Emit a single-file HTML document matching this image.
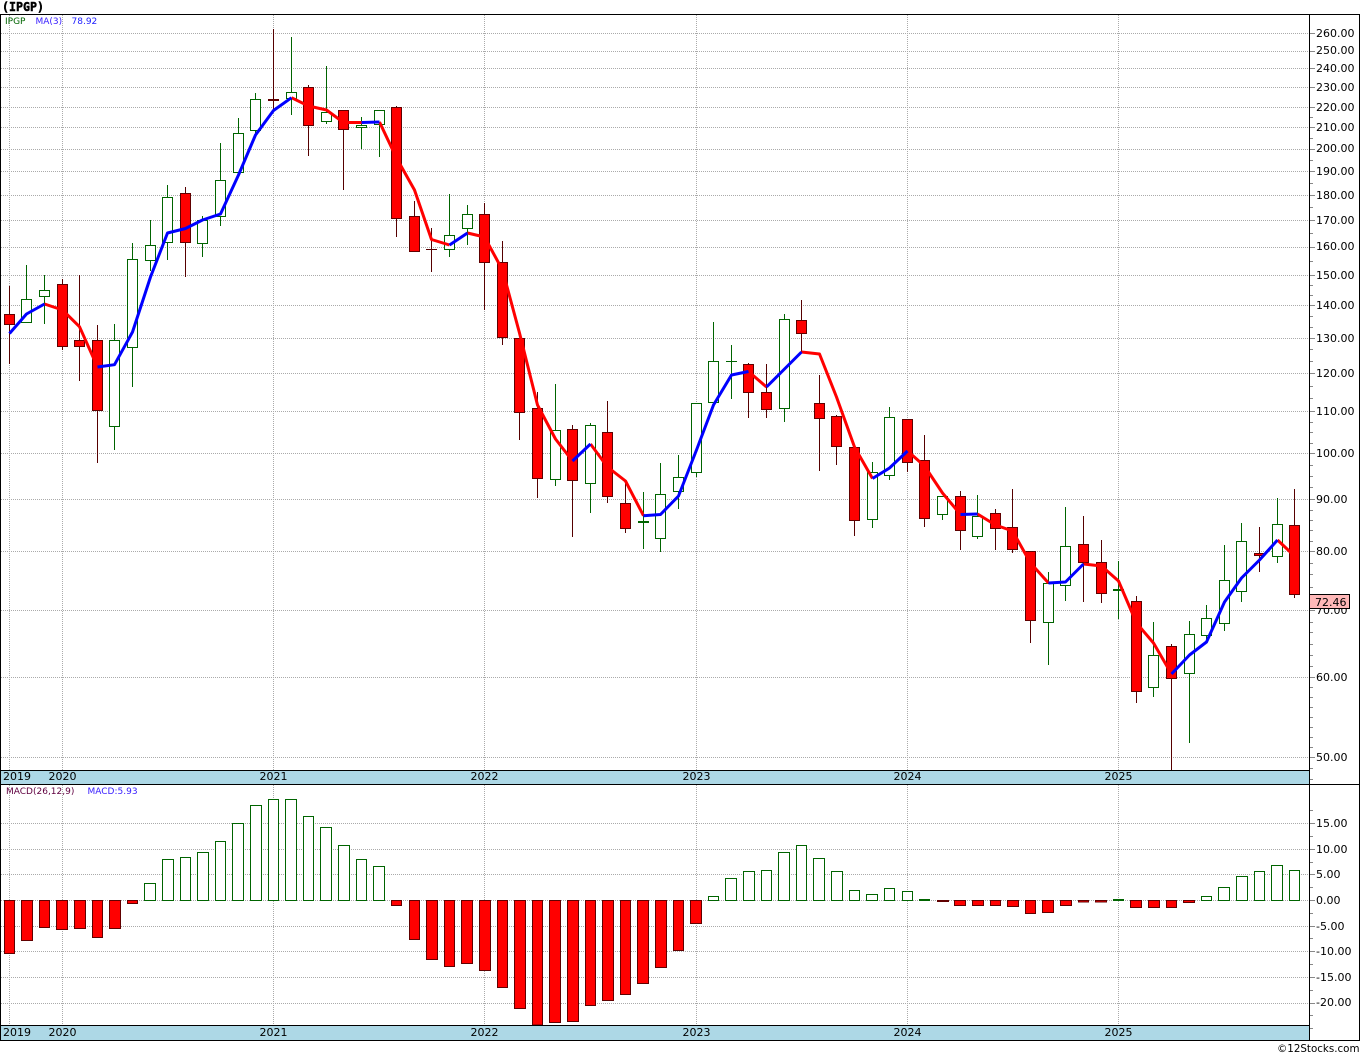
<!DOCTYPE html>
<html>
<head>
<meta charset="utf-8">
<title>IPGP</title>
<style>
html,body{margin:0;padding:0;background:#fff;width:1360px;height:1056px;overflow:hidden}
svg{display:block}
text{font-family:"DejaVu Sans","Liberation Sans",sans-serif;font-size:11px;fill:#000}
.s{font-size:9px}
.crisp{shape-rendering:crispEdges}
</style>
</head>
<body>
<svg width="1360" height="1056" viewBox="0 0 1360 1056" xmlns="http://www.w3.org/2000/svg">
<rect width="1360" height="1056" fill="#fff"/>

<!-- grid -->
<g class="crisp" fill="none" stroke="#aaa" stroke-width="1" stroke-dasharray="1 1">
<path d="M1 33.5H1309M1 51.5H1309M1 68.5H1309M1 87.5H1309M1 107.5H1309M1 127.5H1309M1 149.5H1309M1 171.5H1309M1 195.5H1309M1 220.5H1309M1 247.5H1309M1 275.5H1309M1 305.5H1309M1 338.5H1309M1 373.5H1309M1 411.5H1309M1 453.5H1309M1 499.5H1309M1 551.5H1309M1 610.5H1309M1 677.5H1309M1 757.5H1309"/>
<path d="M9.5 15V770M62.5 15V770M273.5 15V770M484.5 15V770M696.5 15V770M907.5 15V770M1118.5 15V770"/>
<path d="M1 823.5H1309M1 849.5H1309M1 874.5H1309M1 900.5H1309M1 926.5H1309M1 951.5H1309M1 977.5H1309M1 1003.5H1309"/>
<path d="M9.5 785V1025M62.5 785V1025M273.5 785V1025M484.5 785V1025M696.5 785V1025M907.5 785V1025M1118.5 785V1025"/>
</g>

<!-- axis ticks -->
<g class="crisp" fill="none" stroke="#888" stroke-width="1">
<path d="M1310 33.5H1315M1310 51.5H1315M1310 68.5H1315M1310 87.5H1315M1310 107.5H1315M1310 127.5H1315M1310 149.5H1315M1310 171.5H1315M1310 195.5H1315M1310 220.5H1315M1310 247.5H1315M1310 275.5H1315M1310 305.5H1315M1310 338.5H1315M1310 373.5H1315M1310 411.5H1315M1310 453.5H1315M1310 499.5H1315M1310 551.5H1315M1310 610.5H1315M1310 677.5H1315M1310 757.5H1315"/>
<path d="M1310 117.5H1313M1310 138.5H1313M1310 160.5H1313M1310 183.5H1313M1310 207.5H1313M1310 233.5H1313M1310 261.5H1313M1310 285.5H1313M1310 295.5H1313M1310 316.5H1313M1310 327.5H1313M1310 349.5H1313M1310 361.5H1313M1310 386.5H1313M1310 398.5H1313M1310 422.5H1313M1310 432.5H1313M1310 443.5H1313M1310 465.5H1313M1310 476.5H1313M1310 487.5H1313M1310 510.5H1313M1310 520.5H1313M1310 530.5H1313M1310 541.5H1313M1310 563.5H1313M1310 574.5H1313M1310 587.5H1313M1310 597.5H1313M1310 622.5H1313M1310 632.5H1313M1310 644.5H1313M1310 655.5H1313M1310 666.5H1313M1310 687.5H1313M1310 697.5H1313M1310 707.5H1313M1310 717.5H1313M1310 727.5H1313M1310 737.5H1313M1310 747.5H1313M1310 768.5H1313M1310 779.5H1313"/>
<path d="M1310 823.5H1315M1310 849.5H1315M1310 874.5H1315M1310 900.5H1315M1310 926.5H1315M1310 951.5H1315M1310 977.5H1315M1310 1003.5H1315"/>
<path d="M1310 810.5H1313M1310 836.5H1313M1310 862.5H1313M1310 887.5H1313M1310 913.5H1313M1310 938.5H1313M1310 964.5H1313M1310 990.5H1313M1310 1015.5H1313M1310 1028.5H1313"/>
</g>

<!-- wicks -->
<g class="crisp" fill="none" stroke-width="1">
<path stroke="#560000" d="M9.5 286V364M62.5 279V350M79.5 275V381M97.5 325V463M185.5 187V277M273.5 29V111M308.5 85V156M343.5 110V190M396.5 106V237M414.5 201V252M431.5 228V272M426 249.5H437M484.5 203V310M502.5 241V345M519.5 338V440M537.5 392V498M572.5 425V537M607.5 401V503M625.5 481V533M748.5 363V418M766.5 364V418M801.5 300V352M819.5 375V471M836.5 415V465M854.5 445V536M907.5 419V472M924.5 435V527M960.5 491V550M995.5 509V550M1012.5 489V553M1030.5 551V643M1083.5 516V602M1101.5 540V603M1136.5 596V703M1171.5 644V770M1259.5 527V572M1294.5 489V598"/>
<path stroke="#006400" d="M26.5 265V322M44.5 275V324M114.5 324V450M132.5 243V387M150.5 220V271M167.5 185V260M202.5 216V257M220.5 143V226M238.5 118V173M255.5 93V135M291.5 37V115M326.5 66V124M361.5 117V149M379.5 110V157M449.5 194V257M467.5 205V245M555.5 384V486M590.5 423V513M643.5 492V549M660.5 463V552M678.5 455V509M696.5 403V477M713.5 322V407M731.5 345V399M726 361.5H737M784.5 314V422M872.5 462V528M889.5 407V480M942.5 496V520M977.5 495V539M1048.5 572V665M1065.5 507V601M1118.5 561V619M1153.5 622V697M1189.5 621V743M1206.5 605V643M1224.5 545V631M1241.5 523V602M1277.5 498V563"/>
</g>

<!-- candle bodies -->
<g class="crisp" stroke-width="1">
<path fill="#f00" stroke="#600000" d="M4.5 314.5h10v10h-10zM57.5 284.5h10v62h-10zM74.5 340.5h10v6h-10zM92.5 340.5h10v70h-10zM180.5 193.5h10v49h-10zM268.5 99.5h10v1h-10zM303.5 87.5h10v38h-10zM338.5 110.5h10v19h-10zM391.5 107.5h10v111h-10zM409.5 216.5h10v35h-10zM479.5 214.5h10v48h-10zM497.5 262.5h10v75h-10zM514.5 338.5h10v74h-10zM532.5 408.5h10v70h-10zM567.5 429.5h10v51h-10zM602.5 432.5h10v64h-10zM620.5 503.5h10v25h-10zM743.5 364.5h10v28h-10zM761.5 392.5h10v17h-10zM796.5 320.5h10v13h-10zM814.5 403.5h10v15h-10zM831.5 416.5h10v30h-10zM849.5 447.5h10v73h-10zM902.5 419.5h10v43h-10zM919.5 460.5h10v58h-10zM955.5 496.5h10v34h-10zM990.5 513.5h10v15h-10zM1007.5 527.5h10v22h-10zM1025.5 551.5h10v69h-10zM1078.5 544.5h10v18h-10zM1096.5 562.5h10v31h-10zM1131.5 601.5h10v90h-10zM1166.5 646.5h10v32h-10zM1254.5 553.5h10v2h-10zM1289.5 525.5h10v69h-10z"/>
<path fill="#fff" stroke="#006400" d="M21.5 299.5h10v23h-10zM39.5 290.5h10v6h-10zM109.5 340.5h10v86h-10zM127.5 259.5h10v88h-10zM145.5 245.5h10v15h-10zM162.5 197.5h10v45h-10zM197.5 220.5h10v23h-10zM215.5 180.5h10v36h-10zM233.5 133.5h10v39h-10zM250.5 99.5h10v31h-10zM286.5 92.5h10v6h-10zM321.5 112.5h10v9h-10zM356.5 125.5h10v2h-10zM374.5 110.5h10v14h-10zM444.5 235.5h10v14h-10zM462.5 214.5h10v14h-10zM550.5 430.5h10v49h-10zM585.5 425.5h10v58h-10zM638.5 521.5h10v1h-10zM655.5 494.5h10v44h-10zM673.5 477.5h10v14h-10zM691.5 403.5h10v69h-10zM708.5 361.5h10v41h-10zM779.5 319.5h10v89h-10zM867.5 472.5h10v47h-10zM884.5 417.5h10v58h-10zM937.5 496.5h10v18h-10zM972.5 516.5h10v20h-10zM1043.5 583.5h10v39h-10zM1060.5 546.5h10v39h-10zM1113.5 589.5h10v1h-10zM1148.5 655.5h10v32h-10zM1184.5 634.5h10v39h-10zM1201.5 618.5h10v17h-10zM1219.5 580.5h10v43h-10zM1236.5 541.5h10v50h-10zM1272.5 524.5h10v32h-10z"/>
</g>

<!-- MA(3) -->
<g fill="none" stroke-width="3" stroke-linejoin="round" stroke-linecap="butt">
<g stroke="#f00">
<polyline points="44.5,304 62.5,310 79.5,326.7 97.5,367"/>
<polyline points="291.5,97.7 308.5,106 326.5,110 343.5,122.5 361.5,122.5"/>
<polyline points="379.5,122 396.5,158 414.5,190 431.5,239.5 449.5,245"/>
<polyline points="467.5,233 484.5,237 502.5,270 519.5,333 537.5,405 555.5,439 572.5,461"/>
<polyline points="590.5,444 607.5,467 625.5,481 643.5,515.7"/>
<polyline points="748.5,371.5 766.5,387"/>
<polyline points="801.5,352 819.5,354 836.5,397 854.5,447 872.5,478.5"/>
<polyline points="907.5,451 924.5,466 942.5,493 960.5,514.5"/>
<polyline points="977.5,514 995.5,525 1012.5,531 1030.5,563 1048.5,583"/>
<polyline points="1083.5,564 1101.5,566 1118.5,581 1136.5,623 1153.5,643 1171.5,674"/>
<polyline points="1277.5,540 1294.5,556"/>
</g>
<g stroke="#00f">
<polyline points="9.5,333.5 26.5,314 44.5,304"/>
<polyline points="97.5,367 114.5,364.7 132.5,332 150.5,277 167.5,233 185.5,228.5 202.5,220 220.5,214 238.5,175 255.5,135 273.5,110.5 291.5,97.7"/>
<polyline points="361.5,122.5 379.5,122"/>
<polyline points="449.5,245 467.5,233"/>
<polyline points="572.5,461 590.5,444"/>
<polyline points="643.5,515.7 660.5,514.5 678.5,496 696.5,450 713.5,405 731.5,375 748.5,371.5"/>
<polyline points="766.5,387 784.5,369 801.5,352"/>
<polyline points="872.5,478.5 889.5,468 907.5,451"/>
<polyline points="960.5,514.5 977.5,514"/>
<polyline points="1048.5,583 1065.5,582 1083.5,564"/>
<polyline points="1171.5,674 1189.5,655 1206.5,642 1224.5,602 1241.5,578 1259.5,560 1277.5,540"/>
</g>
</g>

<!-- MACD bars -->
<g class="crisp" stroke-width="1">
<path fill="#f00" stroke="#600000" d="M4.5 900.5h10V953.5h-10zM21.5 900.5h11V940.5h-11zM39.5 900.5h10V927.5h-10zM56.5 900.5h11V929.5h-11zM74.5 900.5h11V928.5h-11zM92.5 900.5h10V937.5h-10zM109.5 900.5h11V928.5h-11zM127.5 900.5h10V903.5h-10zM391.5 900.5h10V905.5h-10zM409.5 900.5h10V939.5h-10zM426.5 900.5h11V959.5h-11zM444.5 900.5h10V966.5h-10zM461.5 900.5h11V963.5h-11zM479.5 900.5h11V970.5h-11zM497.5 900.5h10V987.5h-10zM514.5 900.5h11V1008.5h-11zM532.5 900.5h10V1025h-10zM549.5 900.5h11V1022.5h-11zM567.5 900.5h11V1021.5h-11zM585.5 900.5h10V1005.5h-10zM602.5 900.5h11V1000.5h-11zM620.5 900.5h10V994.5h-10zM637.5 900.5h11V983.5h-11zM655.5 900.5h11V967.5h-11zM673.5 900.5h10V950.5h-10zM690.5 900.5h11V923.5h-11zM937.5 900.5h11V901.5h-11zM954.5 900.5h11V905.5h-11zM972.5 900.5h11V905.5h-11zM990.5 900.5h10V905.5h-10zM1007.5 900.5h11V906.5h-11zM1025.5 900.5h10V913.5h-10zM1042.5 900.5h11V912.5h-11zM1060.5 900.5h11V905.5h-11zM1078.5 900.5h10V902h-10zM1095.5 900.5h11V902h-11zM1130.5 900.5h11V907.5h-11zM1148.5 900.5h11V907.5h-11zM1166.5 900.5h10V907.5h-10zM1183.5 900.5h11V902.5h-11z"/>
<path fill="#fff" stroke="#006400" d="M144.5 883.5h11V900.5h-11zM162.5 859.5h11V900.5h-11zM180.5 857.5h10V900.5h-10zM197.5 852.5h11V900.5h-11zM215.5 841.5h10V900.5h-10zM232.5 823.5h11V900.5h-11zM250.5 805.5h11V900.5h-11zM268.5 799.5h10V900.5h-10zM285.5 799.5h11V900.5h-11zM303.5 816.5h10V900.5h-10zM320.5 827.5h11V900.5h-11zM338.5 845.5h11V900.5h-11zM356.5 859.5h10V900.5h-10zM373.5 866.5h11V900.5h-11zM708.5 896.5h10V900.5h-10zM725.5 878.5h11V900.5h-11zM743.5 871.5h11V900.5h-11zM761.5 870.5h10V900.5h-10zM778.5 852.5h11V900.5h-11zM796.5 845.5h10V900.5h-10zM813.5 858.5h11V900.5h-11zM831.5 871.5h11V900.5h-11zM849.5 890.5h10V900.5h-10zM866.5 894.5h11V900.5h-11zM884.5 888.5h10V900.5h-10zM902.5 891.5h10V900.5h-10zM919.5 899.5h10V900.5h-10zM1113.5 899.5h10V900.5h-10zM1201.5 896.5h10V900.5h-10zM1218.5 887.5h11V900.5h-11zM1236.5 876.5h11V900.5h-11zM1254.5 871.5h10V900.5h-10zM1271.5 865.5h11V900.5h-11zM1289.5 870.5h10V900.5h-10z"/>
</g>

<!-- strips and frame -->
<g class="crisp">
<rect x="1" y="771" width="1308" height="13" fill="#add8e6"/>
<rect x="1" y="1026" width="1308" height="14" fill="#add8e6"/>
<path fill="none" stroke="#000" stroke-width="1" d="M0 14.5H1360M0.5 14V1041M1309.5 14V1041M1359.5 14V1041M0 770.5H1309M0 784.5H1360M0 1025.5H1309M0 1040.5H1360"/>
</g>

<!-- legends -->
<text x="2" y="11" textLength="42" lengthAdjust="spacingAndGlyphs" stroke="#000" stroke-width="0.45" style="font-family:'DejaVu Sans Mono','Liberation Mono',monospace;font-weight:bold;font-size:12.5px">(IPGP)</text>
<text class="s" x="5" y="24" style="fill:#006400">IPGP</text>
<text class="s" x="35.5" y="24" style="fill:#3a20ff">MA(3)</text>
<text class="s" x="71.5" y="24" style="fill:#2020ff">78.92</text>
<text class="s" x="6" y="794" style="fill:#600040">MACD(26,12,9)</text>
<text class="s" x="87.5" y="794" style="fill:#3a20ff">MACD:5.93</text>

<!-- year labels -->
<text x="3" y="780">2019</text>
<text x="48.5" y="780">2020</text>
<text x="259.5" y="780">2021</text>
<text x="470.5" y="780">2022</text>
<text x="682.5" y="780">2023</text>
<text x="893.5" y="780">2024</text>
<text x="1104.5" y="780">2025</text>
<text x="3" y="1036">2019</text>
<text x="48.5" y="1036">2020</text>
<text x="259.5" y="1036">2021</text>
<text x="470.5" y="1036">2022</text>
<text x="682.5" y="1036">2023</text>
<text x="893.5" y="1036">2024</text>
<text x="1104.5" y="1036">2025</text>

<!-- price labels -->
<g>
<text x="1316" y="37">260.00</text>
<text x="1316" y="54">250.00</text>
<text x="1316" y="72">240.00</text>
<text x="1316" y="91">230.00</text>
<text x="1316" y="111">220.00</text>
<text x="1316" y="131">210.00</text>
<text x="1316" y="152">200.00</text>
<text x="1316" y="175">190.00</text>
<text x="1316" y="199">180.00</text>
<text x="1316" y="224">170.00</text>
<text x="1316" y="250">160.00</text>
<text x="1316" y="279">150.00</text>
<text x="1316" y="309">140.00</text>
<text x="1316" y="342">130.00</text>
<text x="1316" y="377">120.00</text>
<text x="1316" y="415">110.00</text>
<text x="1316" y="457">100.00</text>
<text x="1316" y="503">90.00</text>
<text x="1316" y="555">80.00</text>
<text x="1316" y="614">70.00</text>
<text x="1316" y="681">60.00</text>
<text x="1316" y="761">50.00</text>
<text x="1316" y="827">15.00</text>
<text x="1316" y="853">10.00</text>
<text x="1316" y="878">5.00</text>
<text x="1316" y="904">0.00</text>
<text x="1316" y="930">-5.00</text>
<text x="1316" y="955">-10.00</text>
<text x="1316" y="981">-15.00</text>
<text x="1316" y="1006">-20.00</text>
</g>

<!-- last price tag -->
<rect class="crisp" x="1309.5" y="594.5" width="40" height="14" fill="#ffb8b8" stroke="#000"/>
<text x="1315" y="606">72.46</text>

<text x="1359.5" y="1052" text-anchor="end" style="font-size:10.3px">©12Stocks.com</text>
</svg>
</body>
</html>
